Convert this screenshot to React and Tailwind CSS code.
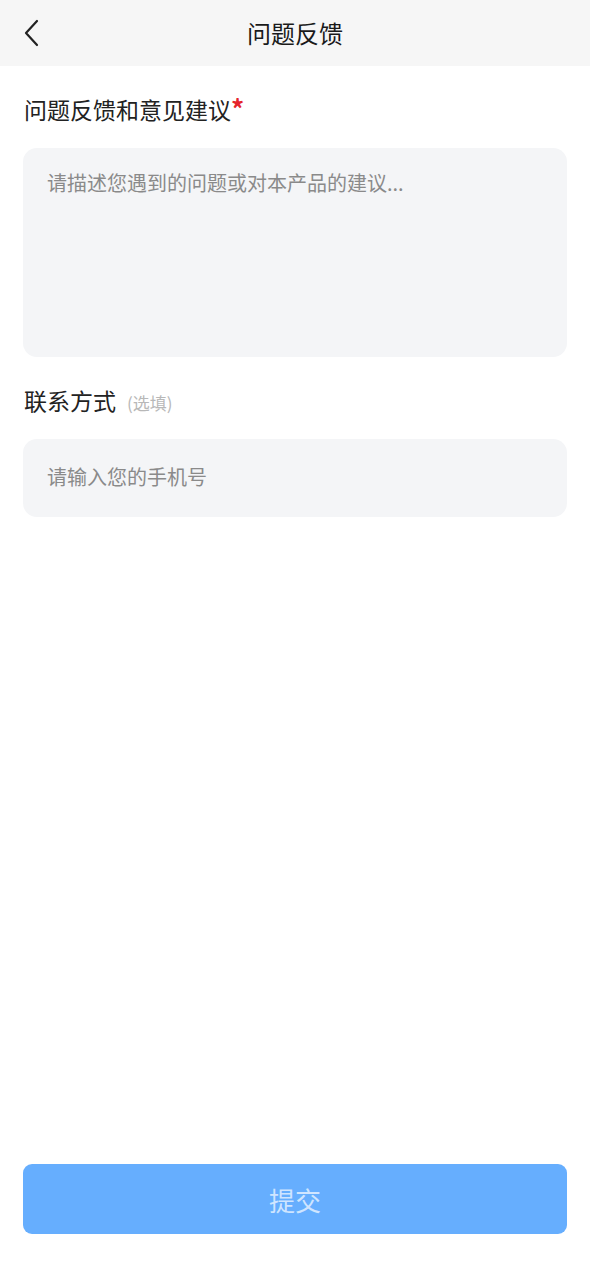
import React, { useState } from 'react';

const font = { fontFamily: '"Noto Sans CJK SC", "Noto Sans", sans-serif' };

const BackIcon = () => (
  <svg width="20" height="28" viewBox="0 0 20 28" fill="none" stroke="#222" strokeWidth="2.2" strokeLinecap="round" strokeLinejoin="round">
    <path d="M15 2 L4 14 L15 26" />
  </svg>
);

const App = () => {
  const [content, setContent] = useState('');
  const [phone, setPhone] = useState('');

  return (
    <div className="w-[590px] h-[1280px] bg-white flex flex-col" style={font}>
      {/* Header */}
      <div className="h-[66px] bg-[#f6f6f6] flex items-center relative shrink-0">
        <button className="absolute left-[22px] top-[19px]">
          <BackIcon />
        </button>
        <div className="flex-1 text-center text-[24px] text-[#1a1a1a]">问题反馈</div>
      </div>

      {/* Form */}
      <div className="flex-1 flex flex-col px-[23px]">
        <div className="mt-[26px] h-[34px] text-[23px] leading-[34px] text-[#222] pl-px">
          问题反馈和意见建议<span className="text-[26px] leading-none font-bold text-[#e5242b]">*</span>
        </div>
        <textarea
          value={content}
          onChange={e => setContent(e.target.value)}
          placeholder="请描述您遇到的问题或对本产品的建议..."
          className="mt-[22px] h-[209px] w-full resize-none rounded-[14px] bg-[#f4f5f7] px-[24px] py-[19px] text-[20px] leading-[32px] text-[#333] placeholder:text-[#8a8a8a] outline-none"
        />

        <div className="mt-[26px] flex items-baseline gap-[11px] pl-px">
          <span className="text-[23px] leading-[34px] text-[#222]">联系方式</span>
          <span className="text-[17px] text-[#b8b8b8]">(选填)</span>
        </div>
        <input
          value={phone}
          onChange={e => setPhone(e.target.value)}
          placeholder="请输入您的手机号"
          className="mt-[22px] h-[78px] w-full rounded-[14px] bg-[#f4f5f7] px-[24px] pb-[4px] text-[20px] text-[#333] placeholder:text-[#8a8a8a] outline-none"
        />

        <div className="flex-1" />

        <button className="mb-[46px] h-[70px] w-full rounded-[9px] bg-[#66aefe] text-[26px] text-[#cfe5ff]">
          提交
        </button>
      </div>
    </div>
  );
};

export default App;
